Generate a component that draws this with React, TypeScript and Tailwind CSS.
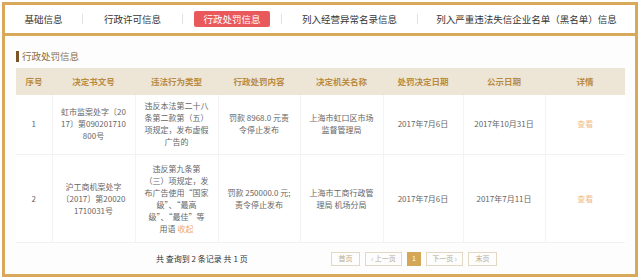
import React from 'react';

const tabs = [
  { label: '基础信息', w: 'w-[77px]' },
  { label: '行政许可信息', w: 'w-[99px]' },
  { label: '行政处罚信息', w: 'w-[98px]', active: true },
  { label: '列入经营异常名录信息', w: 'w-[135px]' },
  { label: '列入严重违法失信企业名单（黑名单）信息', w: 'flex-1' },
];

const cols = [
  { title: '序号', w: 'w-[36px]' },
  { title: '决定书文号', w: 'w-[83px]' },
  { title: '违法行为类型', w: 'w-[83px]' },
  { title: '行政处罚内容', w: 'w-[82px]' },
  { title: '决定机关名称', w: 'w-[83px]' },
  { title: '处罚决定日期', w: 'w-[80px]' },
  { title: '公示日期', w: 'w-[82px]' },
  { title: '详情', w: 'w-[80px]' },
];

const rows = [
  {
    no: '1',
    doc: '虹市监案处字〔2017〕第090201710800号',
    type: <>违反本法第二十八条第二款第（五）项规定，发布虚假广告的</>,
    content: '罚款 8968.0 元责令停止发布',
    org: '上海市虹口区市场监督管理局',
    date: '2017年7月6日',
    pub: '2017年10月31日',
    h: 'h-[60px]',
  },
  {
    no: '2',
    doc: '沪工商机案处字〔2017〕第200201710031号',
    type: (
      <>
        违反第九条第
        <br />
        （三）项规定，发
        <br />
        布广告使用“国家
        <br />
        级”、“最高
        <br />
        级”、“最佳”等
        <br />
        用语 <span className="text-[#f0a860]">收起</span>
      </>
    ),
    content: '罚款 250000.0 元;责令停止发布',
    org: '上海市工商行政管理局 机场分局',
    date: '2017年7月6日',
    pub: '2017年7月11日',
    h: 'h-[88px]',
  },
];

const font = { fontFamily: '"Noto Sans CJK SC", "Noto Sans", sans-serif' };

export default function App() {
  return (
    <div className="w-[640px] h-[279px] bg-white p-[2px] overflow-hidden" style={font}>
      <div className="h-full border-[3px] border-[#d8a95a] flex flex-col">
        <div className="h-[28px] flex items-center bg-white text-[9.5px] text-[#333]">
          {tabs.map((t, i) => (
            <React.Fragment key={t.label}>
              {i > 0 && <span className="w-px h-[10px] bg-[#e2e2e2]" />}
              <div className={`${t.w} flex justify-center`}>
                <span
                  className={
                    t.active
                      ? 'bg-[#e9585b] text-white rounded-[2px] px-[9px] h-[16px] leading-[16px]'
                      : 'leading-[16px]'
                  }
                >
                  {t.label}
                </span>
              </div>
            </React.Fragment>
          ))}
        </div>
        <div className="h-[3px] bg-[#d8a95a]" />
        <div className="flex-1 bg-[#fdfdfd] px-[11px] pt-[14px]">
          <div className="flex items-center h-[14px] gap-[3px]">
            <span className="w-[3px] h-[11px] bg-[#7a5526]" />
            <span className="text-[9.5px] text-[#8a6d45]">行政处罚信息</span>
          </div>
          <table className="mt-[4px] w-[609px] table-fixed border-collapse text-[8px] leading-[12px] text-[#666]">
            <thead>
              <tr className="h-[27px] bg-[#ede5d6]">
                {cols.map((c) => (
                  <th key={c.title} className={`${c.w} font-bold text-[#b98b42] text-[8.5px] text-center`}>
                    {c.title}
                  </th>
                ))}
              </tr>
            </thead>
            <tbody>
              {rows.map((r) => (
                <tr key={r.no} className={`${r.h} bg-white border-b border-[#f1f1f1]`}>
                  <td className="text-center border-r border-[#f3f3f3]">{r.no}</td>
                  <td className="text-center px-[8px] break-all border-r border-[#f3f3f3]">{r.doc}</td>
                  <td className="text-center px-[6px] whitespace-nowrap border-r border-[#f3f3f3]">
                    <div className="whitespace-normal">{r.type}</div>
                  </td>
                  <td className="text-center px-[8px] border-r border-[#f3f3f3]">{r.content}</td>
                  <td className="text-center px-[8px] border-r border-[#f3f3f3]">{r.org}</td>
                  <td className="text-center border-r border-[#f3f3f3]">{r.date}</td>
                  <td className="text-center border-r border-[#f3f3f3]">{r.pub}</td>
                  <td className="text-center text-[#f3bd84]">查看</td>
                </tr>
              ))}
            </tbody>
          </table>
          <div className="flex items-center h-[31px] text-[8px]">
            <span className="ml-[140px] w-[175px] text-[#333]">共 查询到 2 条记录 共 1 页</span>
            <div className="flex items-center gap-[5px] text-[7px] text-[#b9a98a]">
              <span className="w-[29px] h-[14px] border border-[#e3d8c4] flex items-center justify-center">首页</span>
              <span className="w-[37px] h-[14px] border border-[#e3d8c4] flex items-center justify-center">‹ 上一页</span>
              <span className="w-[14px] h-[14px] bg-[#d4a758] text-white flex items-center justify-center">1</span>
              <span className="w-[37px] h-[14px] border border-[#e3d8c4] flex items-center justify-center">下一页 ›</span>
              <span className="w-[29px] h-[14px] border border-[#e3d8c4] flex items-center justify-center">末页</span>
            </div>
          </div>
        </div>
      </div>
    </div>
  );
}
